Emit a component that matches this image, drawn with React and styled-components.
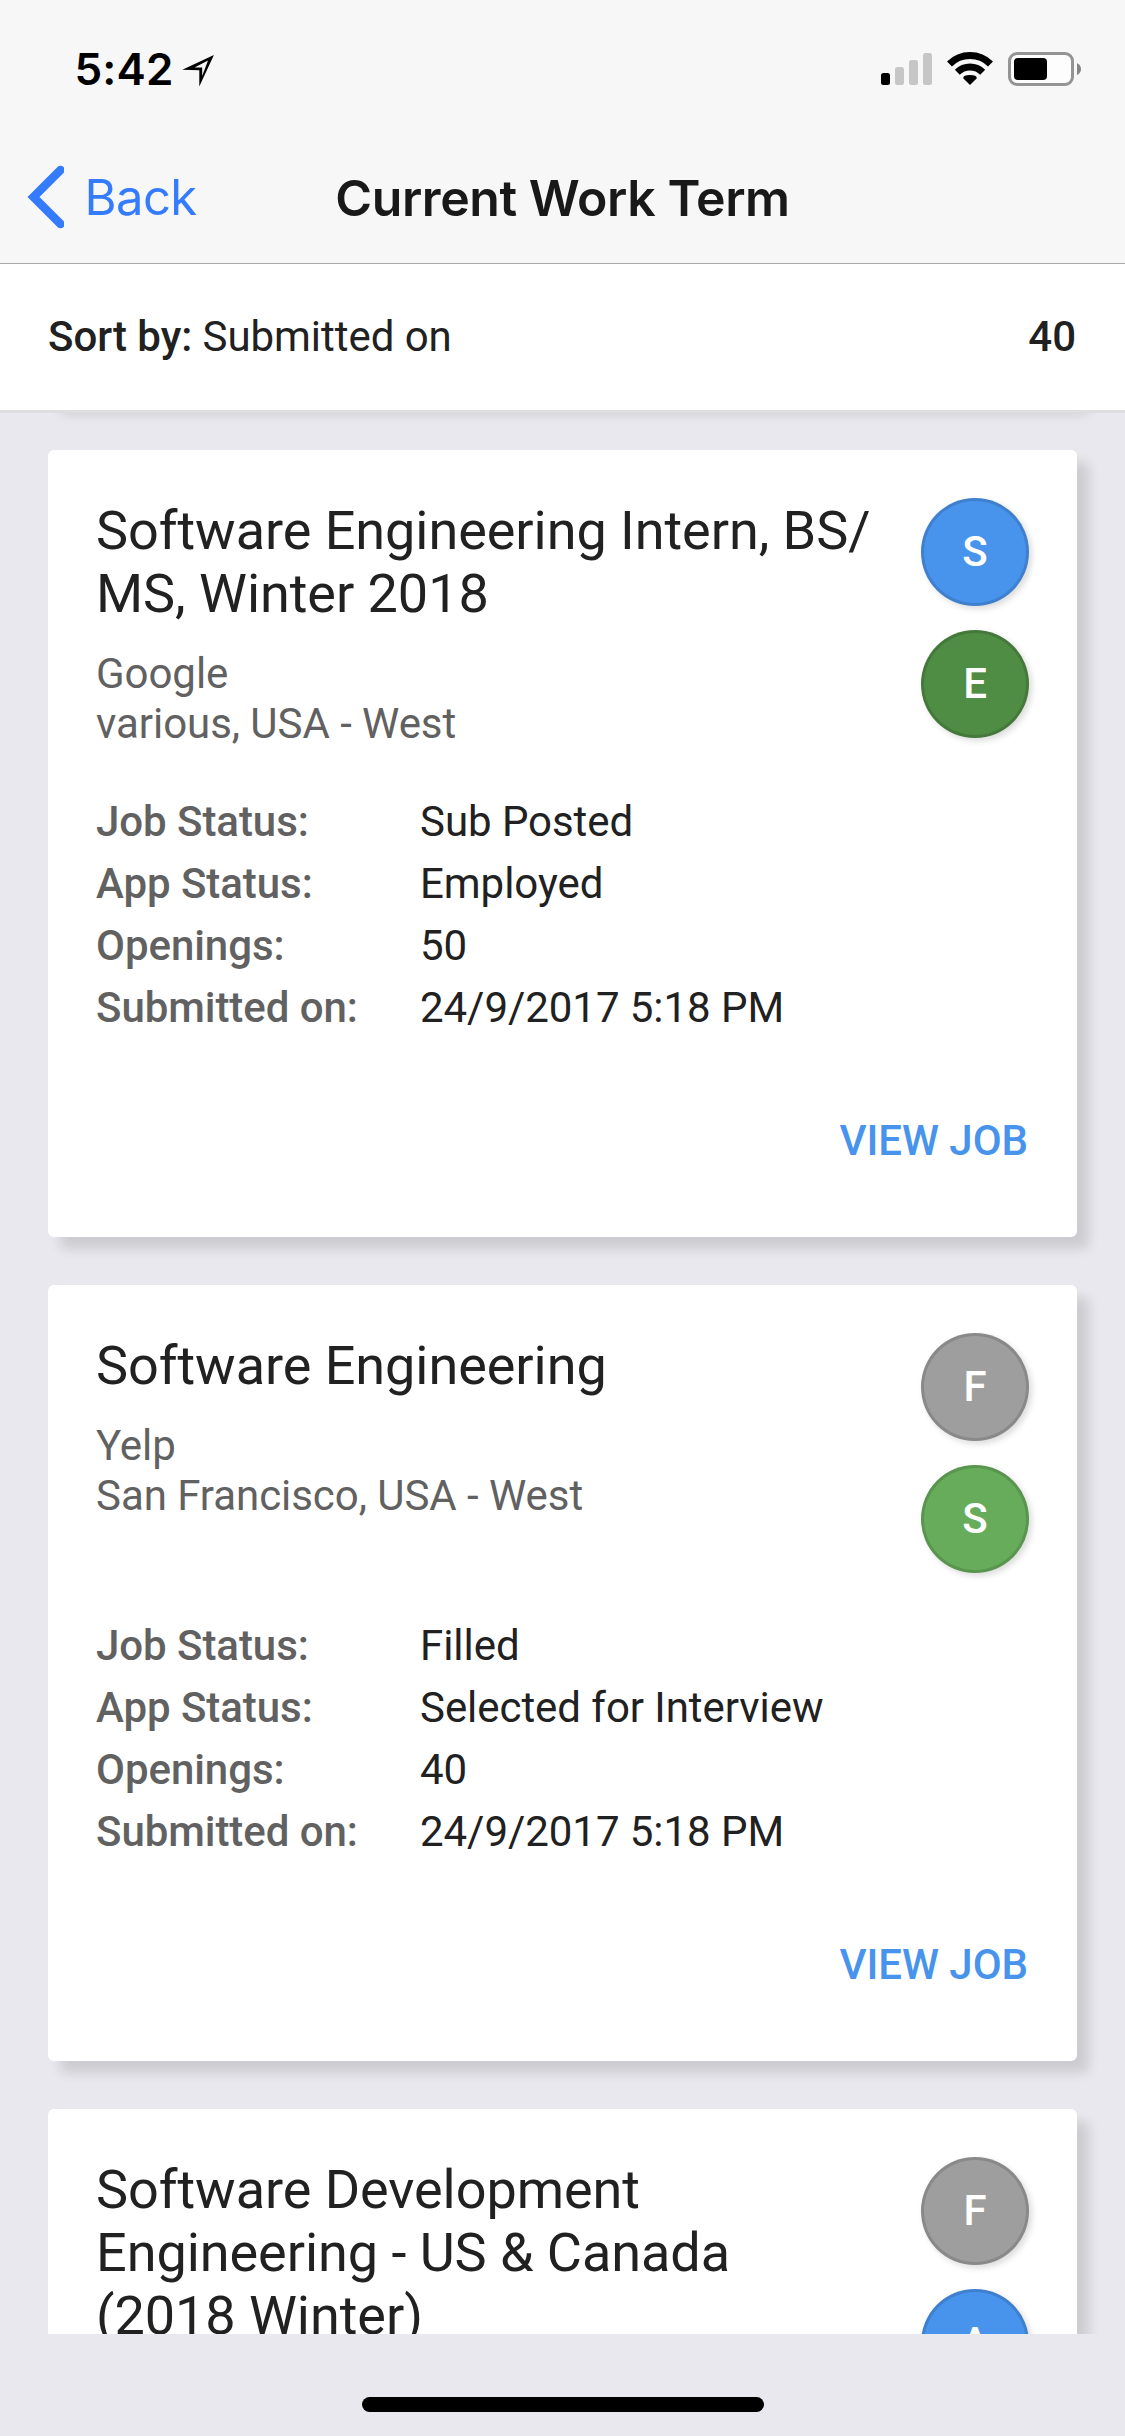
import React from "react";
import styled, { createGlobalStyle } from "styled-components";

const GlobalStyle = createGlobalStyle`
  * { box-sizing: border-box; }
  body { margin: 0; background: #e9e8ee; }
`;

const Screen = styled.div`
  width: 1125px;
  height: 2436px;
  display: flex;
  flex-direction: column;
  overflow: hidden;
  background: #e9e8ee;
  font-family: Roboto, "Liberation Sans", sans-serif;
  font-size: 42px;
  line-height: 50px;
  letter-spacing: -0.05px;
  color: #212121;
`;

const Header = styled.header`
  height: 264px;
  flex: none;
  background: #f7f7f7;
  border-bottom: 1px solid #a9a9ab;
`;

const StatusBar = styled.div`
  height: 132px;
  padding: 6px 44px 0 74.5px;
  display: flex;
  align-items: center;
  justify-content: space-between;
  color: #000;
`;

const StatusGroup = styled.div`
  display: flex;
  align-items: center;
`;

const Clock = styled.span`
  font-family: Inter, "Liberation Sans", sans-serif;
  font-size: 44px;
  font-weight: 600;
  letter-spacing: 0.2px;
`;

const LocationArrow = styled.svg`
  margin: 4px 0 0 8px;
`;

const NavBar = styled.nav`
  height: 131px;
  padding: 0 24px;
  display: grid;
  grid-template-columns: 300px 1fr 300px;
  align-items: center;
`;

const BackButton = styled.button`
  display: flex;
  align-items: center;
  gap: 20.5px;
  padding: 0;
  border: 0;
  background: none;
  color: #347cfd;
  font-family: Inter, "Liberation Sans", sans-serif;
  font-size: 49px;
  line-height: 60px;
  letter-spacing: -0.6px;
`;

const BackChevron = styled.svg`
  margin-bottom: 1px;
`;

const NavTitle = styled.h1`
  margin: 0;
  text-align: center;
  white-space: nowrap;
  font-family: Inter, "Liberation Sans", sans-serif;
  font-size: 50px;
  font-weight: 600;
  line-height: 60px;
  letter-spacing: -0.42px;
  color: #191919;
`;

const SortBar = styled.div`
  height: 149px;
  flex: none;
  padding: 0 49px 0 48px;
  display: flex;
  align-items: center;
  justify-content: space-between;
  background: #fff;
  border-bottom: 3px solid #dedede;
`;

const Strong = styled.span`
  font-weight: 500;
`;

const Viewport = styled.main`
  height: 1921px;
  flex: none;
  overflow: hidden;
`;

const CardList = styled.div`
  display: flex;
  flex-direction: column;
  gap: 48px;
  margin-top: -111px;
  padding: 0 48px;
`;

const Card = styled.article`
  padding: 48px;
  background: #fff;
  border-radius: 6px;
  box-shadow: 12px 12px 12px rgba(0, 0, 0, 0.12);
`;

const ScrolledCard = styled(Card)`
  height: 100px;
`;

const CardHead = styled.div`
  display: flex;
  justify-content: space-between;
  gap: 48px;
`;

const Summary = styled.div`
  flex: 1;
  min-width: 0;
  padding-top: 1px;
`;

const JobTitle = styled.h2`
  margin: 0 0 24px;
  font-size: 54px;
  font-weight: 400;
  line-height: 63px;
`;

const Muted = styled.div`
  color: #616161;
`;

const Badges = styled.div`
  display: flex;
  flex-direction: column;
  gap: 24px;
`;

const Badge = styled.div`
  width: 108px;
  height: 108px;
  display: flex;
  align-items: center;
  justify-content: center;
  border: 3px solid rgba(0, 0, 0, 0.13);
  border-radius: 50%;
  background: ${(p) => p.$color};
  background-clip: border-box;
  box-shadow: 3px 3px 6px rgba(0, 0, 0, 0.14);
  color: #fff;
  font-weight: 500;
`;

const Details = styled.dl`
  margin: 48px 0 0;
  display: grid;
  grid-template-columns: 324px 1fr;
  row-gap: 12px;
`;

const Term = styled.dt`
  font-weight: 500;
  color: #616161;
`;

const Value = styled.dd`
  margin: 0;
`;

const Actions = styled.div`
  display: flex;
  justify-content: flex-end;
  padding: 83px 1px 23px 0;
`;

const ViewButton = styled.button`
  padding: 0;
  border: 0;
  background: none;
  color: #4894ec;
  font: inherit;
  font-weight: 500;
  letter-spacing: inherit;
`;

const HomeArea = styled.footer`
  flex: 1;
  display: flex;
  justify-content: center;
  padding-top: 63px;
`;

const HomeIndicator = styled.div`
  width: 402px;
  height: 15px;
  border-radius: 8px;
  background: #000;
`;

const BLUE = "#4894ec";
const DARK_GREEN = "#4f8c44";
const GREEN = "#67ac5b";
const GRAY = "#9e9e9e";

const jobs = [
  {
    title: <>Software Engineering Intern, BS/<wbr />MS, Winter 2018</>,
    company: "Google",
    location: "various, USA - West",
    badges: [["S", BLUE], ["E", DARK_GREEN]],
    details: [
      ["Job Status:", "Sub Posted"],
      ["App Status:", "Employed"],
      ["Openings:", "50"],
      ["Submitted on:", "24/9/2017 5:18 PM"],
    ],
  },
  {
    title: "Software Engineering",
    company: "Yelp",
    location: "San Francisco, USA - West",
    badges: [["F", GRAY], ["S", GREEN]],
    details: [
      ["Job Status:", "Filled"],
      ["App Status:", "Selected for Interview"],
      ["Openings:", "40"],
      ["Submitted on:", "24/9/2017 5:18 PM"],
    ],
  },
  {
    title: "Software Development Engineering - US & Canada (2018 Winter)",
    badges: [["F", GRAY], ["A", BLUE]],
  },
];

function StatusIcons() {
  return (
    <svg width="200" height="34" viewBox="881 52 200 34">
      <rect x="881" y="73" width="9" height="12" rx="2.5" fill="#000" />
      <rect x="895" y="67" width="9" height="18" rx="2.5" fill="#c6c6c6" />
      <rect x="909" y="60" width="9" height="25" rx="2.5" fill="#c6c6c6" />
      <rect x="923" y="53" width="9" height="32" rx="2.5" fill="#c6c6c6" />
      <g fill="none" stroke="#000" strokeWidth="7">
        <path d="M949.5 64a29 29 0 0 1 41 0" />
        <path d="M957.3 72.3a18 18 0 0 1 25.4 0" />
      </g>
      <path d="M970 85l-6.8-6.8q0-3.2 6.8-3.2t6.8 3.2z" fill="#000" />
      <rect x="1009.5" y="53.5" width="63" height="31" rx="7.5" fill="#fdfdfd" stroke="#949494" strokeWidth="3" />
      <rect x="1014" y="58" width="33" height="22" rx="4" fill="#000" />
      <path d="M1077 63q4 2 4 6t-4 6z" fill="#858585" />
    </svg>
  );
}

function JobCard({ job }) {
  return (
    <Card>
      <CardHead>
        <Summary>
          <JobTitle>{job.title}</JobTitle>
          {job.company && <Muted>{job.company}</Muted>}
          {job.location && <Muted>{job.location}</Muted>}
        </Summary>
        <Badges>
          {job.badges.map(([letter, color]) => (
            <Badge key={letter} $color={color}>{letter}</Badge>
          ))}
        </Badges>
      </CardHead>
      {job.details && (
        <>
          <Details>
            {job.details.map(([term, value]) => (
              <React.Fragment key={term}>
                <Term>{term}</Term>
                <Value>{value}</Value>
              </React.Fragment>
            ))}
          </Details>
          <Actions>
            <ViewButton>VIEW JOB</ViewButton>
          </Actions>
        </>
      )}
    </Card>
  );
}

export default function App() {
  return (
    <Screen>
      <GlobalStyle />
      <Header>
        <StatusBar>
          <StatusGroup>
            <Clock>5:42</Clock>
            <LocationArrow width="34" height="34" viewBox="182 55 34 34">
              <path
                d="M182.3 70.7L213.9 56L199.3 87.5V71.2ZM194.6 68.4H202.2V77L208 61.6Z"
                fill="#000"
                fillRule="evenodd"
              />
            </LocationArrow>
          </StatusGroup>
          <StatusIcons />
        </StatusBar>
        <NavBar>
          <BackButton>
            <BackChevron width="40" height="64" viewBox="24 165 40 64">
              <path d="M60.5 170L33.5 197L60.5 224" fill="none" stroke="#347cfd" strokeWidth="8.5" strokeLinecap="round" />
            </BackChevron>
            Back
          </BackButton>
          <NavTitle>Current Work Term</NavTitle>
        </NavBar>
      </Header>
      <SortBar>
        <span><Strong>Sort by:</Strong> Submitted on</span>
        <Strong>40</Strong>
      </SortBar>
      <Viewport>
        <CardList>
          <ScrolledCard />
          {jobs.map((job, index) => (
            <JobCard key={index} job={job} />
          ))}
        </CardList>
      </Viewport>
      <HomeArea>
        <HomeIndicator />
      </HomeArea>
    </Screen>
  );
}
